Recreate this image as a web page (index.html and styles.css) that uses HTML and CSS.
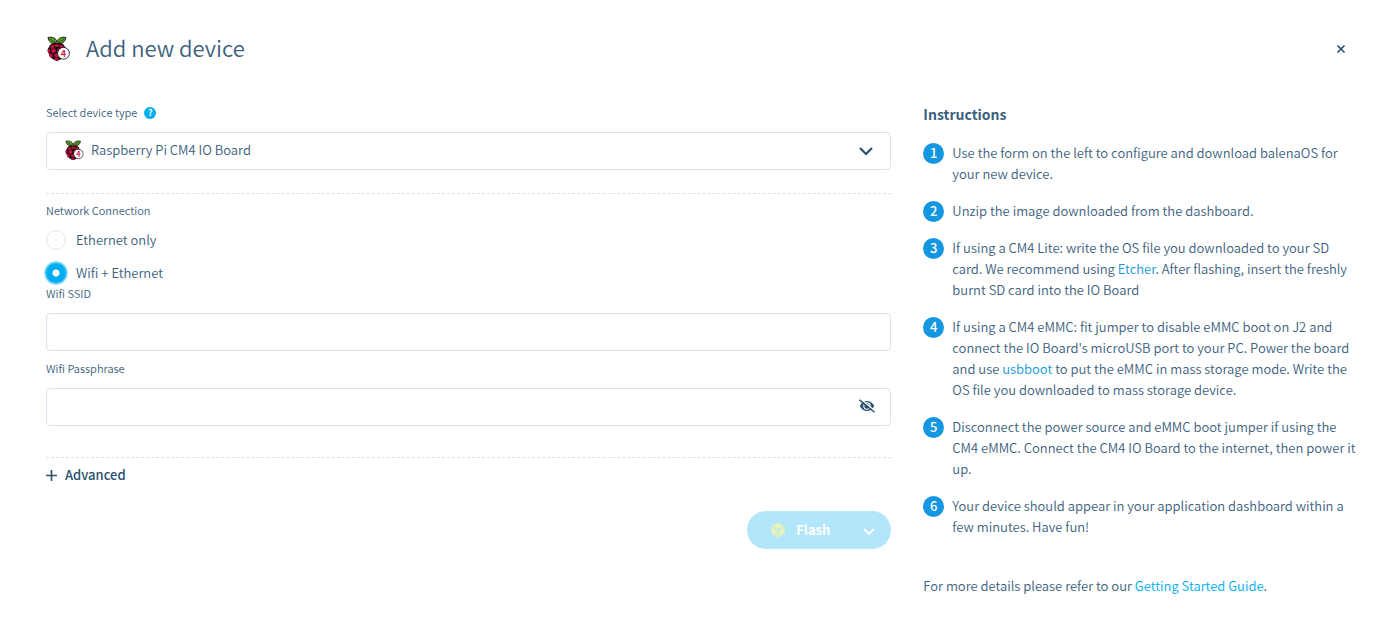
FILE: index.html
```html
<!DOCTYPE html>
<html lang="en">
<head>
<meta charset="utf-8">
<title>Add new device</title>
<link rel="stylesheet" href="styles.css">
</head>
<body>
<svg class="sprite" aria-hidden="true">
  <symbol id="pi" viewBox="0 0 24 26">
    <path d="M11 8C7 8.500 2.500 6 2 1.500 6 .5 10.500 2 11 6 12 2 16 .5 20 1.500 19.500 6 15 8.500 11 8Z" fill="#5a9a2c" stroke="#17260d" stroke-width="1"/>
    <path d="M4 3l6 4M18 3l-6 4" stroke="#24420f" stroke-width=".8"/>
    <path d="M11 7c4-1 7 1 8 4 2 2 2 5 0 7-1 4-5 6-8 7-3-1-7-3-8-7-2-2-2-5 0-7 1-3 4-5 8-4Z" fill="#19070c"/>
    <g fill="#b8143f">
      <ellipse cx="11" cy="9.500" rx="2.700" ry="1.600"/>
      <ellipse cx="6.300" cy="10.800" rx="2.200" ry="1.700" transform="rotate(-35 6.300 10.800)"/>
      <ellipse cx="15.700" cy="10.800" rx="2.200" ry="1.700" transform="rotate(35 15.700 10.800)"/>
      <ellipse cx="7.600" cy="14.800" rx="2.600" ry="2.300" transform="rotate(-40 7.600 14.800)"/>
      <ellipse cx="13.800" cy="14.500" rx="2.500" ry="2.300"/>
      <ellipse cx="3" cy="15" rx="1.100" ry="2.200"/>
      <ellipse cx="5" cy="19.500" rx="1.800" ry="2.300" transform="rotate(-25 5 19.500)"/>
      <ellipse cx="10.800" cy="19.400" rx="2.700" ry="2.100"/>
      <ellipse cx="10.500" cy="23.200" rx="2.300" ry="1.200"/>
    </g>
    <circle cx="17.500" cy="17.300" r="5.900" fill="#fff" stroke="#2a1a1e" stroke-width=".9"/>
  </symbol>
</svg>
<main class="dialog">
  <header class="dialog-header">
    <svg class="pi-large" viewBox="0 0 24 26" aria-hidden="true"><use href="#pi"/><text class="pi-mark" x="17.500" y="20.600" text-anchor="middle">4</text></svg>
    <h1 class="title">Add new device</h1>
    <button class="close" type="button" aria-label="Close">
      <svg width="10" height="10" viewBox="0 0 10 10"><path d="M1.500 1.500l7 7M8.500 1.500l-7 7" stroke="currentColor" stroke-width="1.700"/></svg>
    </button>
  </header>
  <div class="columns">
    <form class="form">
      <div class="label-row">
        <label class="label" for="device-type">Select device type</label>
        <button class="help" type="button" aria-label="Help">?</button>
      </div>
      <div class="field">
        <select class="control select" id="device-type"><option>Raspberry Pi CM4 IO Board</option></select>
        <svg class="pi-small" viewBox="0 0 24 26" aria-hidden="true"><use href="#pi"/><text class="pi-mark" x="17.500" y="20.600" text-anchor="middle">4</text></svg>
        <svg class="chevron" width="14" height="9" viewBox="0 0 14 9" aria-hidden="true"><path d="M1 1l6 6 6-6" fill="none" stroke="currentColor" stroke-width="2.200"/></svg>
      </div>
      <hr class="divider">
      <fieldset class="network">
        <legend class="label">Network Connection</legend>
        <label class="choice"><input class="radio" type="radio" name="network"><span>Ethernet only</span></label>
        <label class="choice"><input class="radio" type="radio" name="network" checked><span>Wifi + Ethernet</span></label>
      </fieldset>
      <label class="label label-ssid" for="ssid">Wifi SSID</label>
      <div class="field"><input class="control" id="ssid" type="text"></div>
      <label class="label label-next" for="pass">Wifi Passphrase</label>
      <div class="field">
        <input class="control" id="pass" type="password">
        <button class="reveal" type="button" aria-label="Show passphrase">
          <svg width="16" height="14" viewBox="0 0 16 14"><path d="M.8 7C4 .2 12 .2 15.200 7 12 13.800 4 13.800.8 7Z" fill="currentColor"/><circle cx="8" cy="7" r="3.200" fill="none" stroke="#fff" stroke-width="1.100"/><path d="M7.500 5.400a1.800 1.800 0 0 1 2.200 1.800" fill="none" stroke="#fff"/><path d="M1.500 0l14 11.500" stroke="#fff" stroke-width="1.300"/><path d="M.4 .8l15.200 12.500" stroke="currentColor" stroke-width="1.400"/></svg>
        </button>
      </div>
      <hr class="divider divider-low">
      <button class="advanced" type="button">
        <svg width="11" height="11" viewBox="0 0 11 11" aria-hidden="true"><path d="M5.500 0v11M0 5.500h11" stroke="currentColor" stroke-width="1.600"/></svg>
        <span>Advanced</span>
      </button>
      <div class="actions">
        <button class="flash" type="button" disabled>
          <svg width="14" height="16" viewBox="0 0 14 16" aria-hidden="true"><path d="M7 .5l6.800 3.700v7.600L7 15.500.2 11.800V4.200Z" fill="#e2f3bd"/><path d="M1.500 4.800L7 7.900l5.500-3.100M7 8v6.500" fill="none" stroke="#b2e7fb" stroke-width="1"/></svg>
          <span>Flash</span>
          <svg class="flash-arrow" width="12" height="8" viewBox="0 0 12 8" aria-hidden="true"><path d="M1 1l5 5 5-5" fill="none" stroke="currentColor" stroke-width="1.800"/></svg>
        </button>
      </div>
    </form>
    <section class="instructions">
      <h2 class="subtitle">Instructions</h2>
      <ol class="steps">
        <li class="step"><span class="num">1</span><p>Use the form on the left to configure and download balenaOS for your new device.</p></li>
        <li class="step"><span class="num">2</span><p>Unzip the image downloaded from the dashboard.</p></li>
        <li class="step"><span class="num">3</span><p>If using a CM4 Lite: write the OS file you downloaded to your SD card. We recommend using <a href="#">Etcher</a>. After flashing, insert the freshly burnt SD card into the IO Board</p></li>
        <li class="step"><span class="num">4</span><p>If using a CM4 eMMC: fit jumper to disable eMMC boot on J2 and connect the IO Board's microUSB port to your PC. Power the board and use <a href="#">usbboot</a> to put the eMMC in mass storage mode. Write the OS file you downloaded to mass storage device.</p></li>
        <li class="step"><span class="num">5</span><p>Disconnect the power source and eMMC boot jumper if using the CM4 eMMC. Connect the CM4 IO Board to the internet, then power it up.</p></li>
        <li class="step"><span class="num">6</span><p>Your device should appear in your application dashboard within a few minutes. Have fun!</p></li>
      </ol>
      <p class="more">For more details please refer to our <a href="#">Getting Started Guide</a>.</p>
    </section>
  </div>
</main>
</body>
</html>
```
FILE: styles.css
```css
* { box-sizing: border-box; }
body {
  margin: 0;
  background: #fff;
  color: #3c5f7e;
  font: 350 13px/21px "Noto Sans CJK SC DemiLight", "Noto Sans CJK SC", "Noto Sans", sans-serif;
}
button, input, select { font: inherit; color: inherit; }
button { border: 0; padding: 0; background: none; cursor: pointer; }
p, h1, h2, ol { margin: 0; padding: 0; }
a { color: #1496e1; text-decoration: none; }
svg { display: block; flex: none; }
.sprite { position: absolute; width: 0; height: 0; }
.pi-mark { font: bold 9px "Noto Sans CJK SC", sans-serif; fill: #d81b4a; }
.subtitle, .num, .advanced, .flash, .help { font-family: "Noto Sans CJK SC", "Noto Sans", sans-serif; }
.dialog { padding: 32px 43px 20px 46px; }
.dialog-header { display: flex; align-items: center; height: 34px; }
.pi-large { width: 24px; height: 26px; margin-right: 16px; }
.title { flex: 1; padding-bottom: 3px; font-size: 22px; line-height: 31px; font-weight: inherit; }
.close { display: grid; place-items: center; width: 10px; height: 20px; color: #2a506f; }
.columns { display: grid; grid-template-columns: 2fr 1fr; gap: 32px; padding-top: 38px; }
.label { display: block; padding: 0 0 2px; font-size: 11px; line-height: 16px; }
.label-row { display: flex; align-items: center; gap: 7px; }
.help { width: 12px; height: 12px; border-radius: 50%; background: #00aeef; color: #fff; font-size: 9px; line-height: 12px; font-weight: 700; }
.field { position: relative; margin-top: 10px; }
.control { display: block; width: 100%; height: 38px; padding: 0 16px; border: 1px solid #dde1f0; border-radius: 4px; background: #fff; outline: 0; }
.select { appearance: none; padding: 0 44px 3px; }
.pi-small { position: absolute; left: 18px; top: 8px; width: 20px; height: 21px; pointer-events: none; }
.chevron { position: absolute; right: 18px; top: 15px; color: #2a506f; pointer-events: none; }
.divider { margin: 23px 0 8px; border: 0; border-top: 1px dashed #dde1ea; }
.network { margin: 0; padding: 0; border: 0; }
.choice { display: flex; align-items: center; gap: 10px; height: 20px; margin-top: 10px; }
.choice + .choice { margin-top: 13px; }
.choice span, .advanced span { padding-bottom: 2px; line-height: 19px; }
.radio { appearance: none; width: 20px; height: 20px; margin: 0; border: 1px solid #dde1f0; border-radius: 50%; }
.radio:checked { border: 0; background: radial-gradient(circle, #fff 3px, #00aeef 4px); box-shadow: 0 0 2px 1px #00aeef; }
.label-ssid { margin-top: 2px; }
.label-next { margin-top: 9px; }
.reveal { position: absolute; right: 16px; top: 11px; color: #2a506f; }
.divider-low { margin-top: 31px; margin-bottom: 7px; }
.advanced { display: flex; align-items: center; gap: 8px; color: #2a506f; font-weight: 500; }
.actions { display: flex; justify-content: flex-end; margin-top: 25px; }
.flash { display: flex; align-items: center; height: 38px; padding: 0 16px 0 24px; gap: 11px; border-radius: 19px; background: #b2e7fb; color: #fff; font-weight: 700; }
.flash span { padding-bottom: 1px; }
.flash-arrow { margin: 3px 0 0 22px; }
.subtitle { font-size: 14px; line-height: 20px; font-weight: 700; }
.steps { display: grid; gap: 16px; margin-top: 18px; list-style: none; }
.step { display: flex; gap: 8px; margin-right: -12px; }
.num { flex: none; width: 21px; height: 21px; margin: 1px 0 -1px; border-radius: 50%; background: #1496e1; color: #fff; line-height: 19px; font-weight: 500; text-align: center; }
.more { margin-top: 38px; }
.more a { color: #00aeef; }
```
